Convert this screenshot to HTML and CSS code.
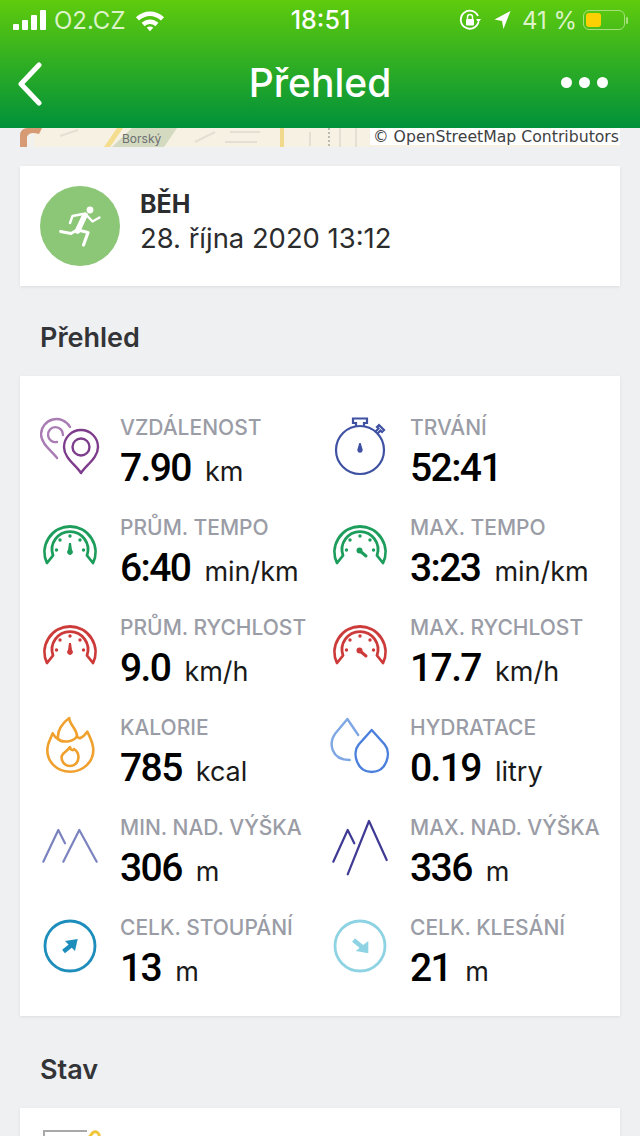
FILE: index.html
```html
<!DOCTYPE html>
<html lang="cs">
<head>
  <meta charset="utf-8" />
  <title>Přehled</title>
  <link rel="stylesheet" href="styles.css">
</head>

<body>
  <svg class="defs" width="0" height="0">
    <symbol id="gauge-shell" viewBox="0 0 60 70">
      <path d="M7 47A25.5 25.5 0 1 1 53 47L47 39.5A18 18 0 1 0 13 39.5Z" fill="none" stroke="currentColor" stroke-width="2.8" stroke-linejoin="round"/>
      <g fill="currentColor">
        <circle cx="16.5" cy="34" r="1.7"/>
        <circle cx="20" cy="24" r="1.7"/>
        <circle cx="30" cy="20" r="1.7"/>
        <circle cx="40" cy="24" r="1.7"/>
        <circle cx="43.5" cy="34" r="1.7"/>
      </g>
    </symbol>
    <symbol id="gauge-avg" viewBox="0 0 60 70">
      <use href="#gauge-shell"/>
      <path d="M29 27h2l1 7a2.8 2.8 0 1 1-4 0Z" fill="currentColor"/>
    </symbol>
    <symbol id="gauge-max" viewBox="0 0 60 70">
      <use href="#gauge-shell"/>
      <circle cx="29.5" cy="34.5" r="3" fill="currentColor"/>
      <path d="M30 35l6 5" stroke="currentColor" stroke-width="3" stroke-linecap="round"/>
    </symbol>
  </svg>

  <header class="top-bar">
    <div class="status-bar">
      <div class="status-side">
        <div class="signal"><i></i><i></i><i></i><i></i></div>
        <span class="carrier">O2.CZ</span>
        <svg class="wifi" width="30" height="23" viewBox="0 0 32 24">
          <path d="M1 8.5C9.500 .5 22.500 .5 31 8.500L27.700 12C20.500 5.500 11.500 5.500 4.300 12Z" fill="#fff"/>
          <path d="M7 14.500C12.500 9.700 19.500 9.700 25 14.500L21.700 18C18 15 14 15 10.300 18Z" fill="#fff"/>
          <path d="M12.500 19.500C14.700 18 17.300 18 19.500 19.500L16 23.500Z" fill="#fff"/>
        </svg>
      </div>
      <span class="clock">18:51</span>
      <div class="status-side status-right">
        <svg width="22" height="22" viewBox="0 0 22 22">
          <path d="M19.500 13A9 9 0 1 1 19 7" fill="none" stroke="#fff" stroke-width="1.800"/>
          <path d="M17 10h5l-2.500 3.500Z" fill="#fff"/>
          <rect x="7" y="10" width="8" height="6.500" rx="1" fill="#fff"/>
          <path d="M8.500 10V8a2.500 2.500 0 0 1 5 0v2" fill="none" stroke="#fff" stroke-width="1.400"/>
        </svg>
        <svg class="locate" width="17" height="20" viewBox="0 0 18 20">
          <path d="M17.500 .5L10 19.500 8.500 11 .5 9.500Z" fill="#fff"/>
        </svg>
        <span class="battery-text">41 %</span>
        <div class="battery"><div class="battery-level"></div></div>
        <div class="battery-cap"></div>
      </div>
    </div>
    <nav class="nav-bar">
      <svg class="back" width="26" height="44" viewBox="0 0 26 44">
        <path d="M22 3L4 22l18 19" fill="none" stroke="#fff" stroke-width="5" stroke-linecap="round" stroke-linejoin="round"/>
      </svg>
      <h1>Přehled</h1>
      <div class="more"><i></i><i></i><i></i></div>
    </nav>
  </header>

  <div class="map-strip">
    <svg width="600" height="20" viewBox="0 0 600 20">
      <rect width="600" height="19" fill="#f6f1e3"/>
      <path d="M0 0h14v19H0Z" fill="#f2f1ee"/>
      <path d="M0 19V8Q0 0 8 0h14l-3 6Q9 3 7 9V19Z" fill="#d69a74"/>
      <path d="M92 19L112 0h45l-13 19Z" fill="#d3dabf"/>
      <path d="M84 19L97 0h6L90 19Z" fill="#f4dd8c"/>
      <path d="M260 0h4v19h-4Z" fill="#f0d98a"/>
      <path d="M40 8l18-6M175 14l20-10M210 4h30M205 14h32M290 4v14M320 0v19M336 0v19" stroke="#e3dfd3" stroke-width="2"/>
      <path d="M309 0v19" stroke="#bdbab0" stroke-width="2" stroke-dasharray="2 2"/>
    </svg>
    <span class="map-label">Borský</span>
    <span class="map-credit">© OpenStreetMap Contributors</span>
  </div>

  <section class="card activity">
    <div class="activity-badge">
      <svg width="80" height="80" viewBox="0 0 80 80">
        <circle cx="50" cy="24" r="3.400" fill="#fff"/>
        <g fill="none" stroke="#fff" stroke-linecap="round" stroke-linejoin="round">
          <path d="M45 29L37.500 45" stroke-width="5.500"/>
          <path d="M46.500 29l6 6.500 7-4" stroke-width="2.400"/>
          <path d="M43 28l-10.500 2-2.500 7" stroke-width="2.400"/>
          <path d="M37 44l-6 3.500-10.500-2" stroke-width="2.800"/>
          <path d="M38 44l10 2.500-4.500 12.500" stroke-width="3.200"/>
        </g>
      </svg>
    </div>
    <div class="activity-text">
      <div class="activity-name">BĚH</div>
      <div class="activity-date">28. října 2020 13:12</div>
    </div>
  </section>

  <h2 class="section-title">Přehled</h2>

  <section class="card stats">
    <div class="stat">
      <svg class="stat-icon" viewBox="0 0 60 70">
        <path d="M17 42C12 35 1 28 1 18A15.500 15.500 0 0 1 30 11" fill="none" stroke="#a97cb4" stroke-width="2.400" stroke-linecap="round"/>
        <path d="M23 19a7.500 7.500 0 1 0-6 7" fill="none" stroke="#a97cb4" stroke-width="2.400" stroke-linecap="round"/>
        <path d="M41 57C36 49 24 42 24 31a17 17 0 0 1 34 0C58 42 46 49 41 57Z" fill="#fff" stroke="#7d3c8c" stroke-width="2.400" stroke-linejoin="round"/>
        <circle cx="41" cy="31" r="8.500" fill="none" stroke="#7d3c8c" stroke-width="2.400"/>
      </svg>
      <div>
        <div class="stat-label">VZDÁLENOST</div>
        <div class="stat-value"><b>7.90</b><span>km</span></div>
      </div>
    </div>
    <div class="stat">
      <svg class="stat-icon" viewBox="0 0 60 70">
        <g fill="none" stroke="#3f51a3" stroke-width="2.200">
          <circle cx="30" cy="34" r="24"/>
          <path d="M26 10V7h-3V2.500h14V7h-3v3"/>
          <path d="M45 16l3.500-3.500-1.500-1.500 2-2 5 5-2 2-1.500-1.500-3 3"/>
        </g>
        <path d="M29.300 27h1.400l1.800 6a2.700 2.700 0 1 1-5 0Z" fill="#3f51a3"/>
      </svg>
      <div>
        <div class="stat-label">TRVÁNÍ</div>
        <div class="stat-value"><b>52:41</b></div>
      </div>
    </div>
    <div class="stat">
      <svg class="stat-icon tint-green"><use href="#gauge-avg"/></svg>
      <div>
        <div class="stat-label">PRŮM. TEMPO</div>
        <div class="stat-value"><b>6:40</b><span>min/km</span></div>
      </div>
    </div>
    <div class="stat">
      <svg class="stat-icon tint-green"><use href="#gauge-max"/></svg>
      <div>
        <div class="stat-label">MAX. TEMPO</div>
        <div class="stat-value"><b>3:23</b><span>min/km</span></div>
      </div>
    </div>
    <div class="stat">
      <svg class="stat-icon tint-red"><use href="#gauge-avg"/></svg>
      <div>
        <div class="stat-label">PRŮM. RYCHLOST</div>
        <div class="stat-value"><b>9.0</b><span>km/h</span></div>
      </div>
    </div>
    <div class="stat">
      <svg class="stat-icon tint-red"><use href="#gauge-max"/></svg>
      <div>
        <div class="stat-label">MAX. RYCHLOST</div>
        <div class="stat-value"><b>17.7</b><span>km/h</span></div>
      </div>
    </div>
    <div class="stat">
      <svg class="stat-icon" viewBox="0 0 60 70">
        <g fill="none" stroke="#f0a02c" stroke-width="2.600" stroke-linejoin="round" stroke-linecap="round">
          <path d="M30 55.700C17 55.700 7.300 46 7.300 34C7.300 27 11 22 12.700 17.300C14 20 16 22 18 23C17 15 22 7 29.300 2C29 8 37 13 37 20C37 21 39 22 40 22.300C43 21 45 19 47.300 15.700C50 21 53.300 27 53.300 34C53.300 46 43 55.700 30 55.700Z"/>
          <path d="M18 23C20 25 25 26 30 25C34 24 36 22 37 20"/>
          <path d="M30 31C30.500 34 33 35 34 33C37 35 38.500 38 38.500 41C38.500 46 35 50 30 50C25 50 21.500 46 21.500 41C21.500 37 27 36 30 31Z"/>
        </g>
      </svg>
      <div>
        <div class="stat-label">KALORIE</div>
        <div class="stat-value"><b>785</b><span>kcal</span></div>
      </div>
    </div>
    <div class="stat">
      <svg class="stat-icon" viewBox="0 0 60 70">
        <path d="M28.200 19L17.400 3 5.700 17C-2 27 1 44 19.700 44" fill="none" stroke="#7fa7e4" stroke-width="2.400" stroke-linecap="round" stroke-linejoin="round"/>
        <path d="M41.700 14L28.700 28.500C21.700 37 26.700 56 41.700 56C56.700 56 61.700 37 54.700 28.500Z" fill="#fff" stroke="#4a7fdc" stroke-width="2.400" stroke-linejoin="round"/>
      </svg>
      <div>
        <div class="stat-label">HYDRATACE</div>
        <div class="stat-value"><b>0.19</b><span>litry</span></div>
      </div>
    </div>
    <div class="stat">
      <svg class="stat-icon" viewBox="0 0 60 70">
        <path d="M3.300 45.700L18.300 14 25 27.300M23.300 45.700L39.300 14 56.700 45.700" fill="none" stroke="#7b83bf" stroke-width="2.200" stroke-linecap="round" stroke-linejoin="round"/>
      </svg>
      <div>
        <div class="stat-label">MIN. NAD. VÝŠKA</div>
        <div class="stat-value"><b>306</b><span>m</span></div>
      </div>
    </div>
    <div class="stat">
      <svg class="stat-icon" viewBox="0 0 60 70">
        <path d="M3.300 45.700L17.700 14 24.300 27.300M17.700 58.300L39 5 56.700 44" fill="none" stroke="#3f3a94" stroke-width="2.200" stroke-linecap="round" stroke-linejoin="round"/>
      </svg>
      <div>
        <div class="stat-label">MAX. NAD. VÝŠKA</div>
        <div class="stat-value"><b>336</b><span>m</span></div>
      </div>
    </div>
    <div class="stat">
      <svg class="stat-icon" viewBox="0 0 60 70">
        <circle cx="30" cy="30" r="25" fill="none" stroke="#1d8dbb" stroke-width="2.800"/>
        <path d="M25 25L37.700 23 35 35Z" fill="#1d8dbb"/>
        <path d="M31 29.500L23.500 35.500" stroke="#1d8dbb" stroke-width="4.500"/>
      </svg>
      <div>
        <div class="stat-label">CELK. STOUPÁNÍ</div>
        <div class="stat-value"><b>13</b><span>m</span></div>
      </div>
    </div>
    <div class="stat">
      <svg class="stat-icon" viewBox="0 0 60 70">
        <circle cx="30" cy="30" r="25" fill="none" stroke="#8ed3e3" stroke-width="2.800"/>
        <path d="M38.300 37.300L25.700 35 38.300 25Z" fill="#8ed3e3"/>
        <path d="M23.500 24L32 31" stroke="#8ed3e3" stroke-width="4.500"/>
      </svg>
      <div>
        <div class="stat-label">CELK. KLESÁNÍ</div>
        <div class="stat-value"><b>21</b><span>m</span></div>
      </div>
    </div>
  </section>

  <h2 class="section-title">Stav</h2>

  <section class="card status-card">
    <svg width="60" height="28" viewBox="0 0 60 28">
      <path d="M1 28V1H44" fill="none" stroke="#a9a9a9" stroke-width="2"/>
      <path d="M44 10L50 2.500a4 4 0 0 1 6 4.500" fill="none" stroke="#f0c63a" stroke-width="3"/>
    </svg>
  </section>
</body>
</html>
```

FILE: styles.css
```css
html, body {
  margin: 0;
  padding: 0;
  height: 100%;
  overflow: hidden;
  background: #eff0f2;
  font-family: Inter, "Noto Sans", sans-serif;
  color: #2b2c2e;
}

.defs {
  display: block;
}

.top-bar {
  height: 128px;
  color: #fff;
  background: linear-gradient(#5fcb0d, #00913a);
}

.status-bar {
  height: 40px;
  padding: 0 12px 0 13px;
  display: grid;
  grid-template-columns: 1fr auto 1fr;
  align-items: center;
  font-size: 25px;
}

.status-side {
  display: flex;
  align-items: center;
}

.status-right {
  justify-content: flex-end;
  color: #dcf3c8;
}

.signal {
  display: flex;
  align-items: flex-end;
  gap: 3px;
  height: 20px;
  margin-right: 8px;
}

.signal i {
  width: 6px;
  background: #fff;
  border-radius: 1px;
}

.signal i:nth-child(1) { height: 6px; }
.signal i:nth-child(2) { height: 10px; }
.signal i:nth-child(3) { height: 15px; }
.signal i:nth-child(4) { height: 20px; }

.carrier {
  color: #dcf3c8;
  font-size: 24px;
  font-weight: 400;
  margin-right: 10px;
}

.clock {
  font-weight: 500;
}

.locate {
  margin: 0 11px 0 13px;
}

.battery-text {
  font-size: 24px;
  margin-right: 6px;
}

.battery {
  width: 42px;
  height: 20px;
  padding: 2px;
  box-sizing: border-box;
  border: 1.5px solid #a6e07c;
  border-radius: 6px;
}

.battery-level {
  width: 15px;
  height: 100%;
  background: #fdd004;
  border-radius: 3px;
}

.battery-cap {
  width: 2px;
  height: 7px;
  margin-left: 1px;
  background: #a6e07c;
  border-radius: 1px;
}

.nav-bar {
  height: 88px;
  padding: 0 32px 4px;
  box-sizing: border-box;
  display: grid;
  grid-template-columns: 1fr auto 1fr;
  align-items: center;
}

.back {
  margin: 4px 0 0 -15px;
}

.nav-bar h1 {
  margin: 0;
  font-size: 39px;
  font-weight: 500;
}

.more {
  display: flex;
  justify-content: flex-end;
  gap: 7px;
}

.more i {
  width: 11px;
  height: 11px;
  background: #fff;
  border-radius: 50%;
}

.map-strip {
  position: relative;
  height: 20px;
  margin: 0 20px 18px;
  overflow: hidden;
}

.map-strip svg {
  display: block;
}

.map-label {
  position: absolute;
  left: 102px;
  top: 3px;
  font-size: 12px;
  line-height: 16px;
  color: #6d6f72;
}

.map-credit {
  position: absolute;
  right: 0;
  top: 0;
  padding: 0 1px 0 3px;
  height: 17px;
  background: #fff;
  font-family: "DejaVu Sans", sans-serif;
  font-size: 15.7px;
  line-height: 17px;
  color: #404244;
}

.card {
  margin: 0 20px;
  background: #fff;
  box-shadow: 0 1px 3px rgba(0, 0, 0, 0.08);
}

.activity {
  height: 120px;
  padding: 0 20px;
  box-sizing: border-box;
  display: flex;
  align-items: center;
  gap: 21px;
}

.activity-badge {
  width: 80px;
  height: 80px;
  border-radius: 50%;
  background: #8cc677;
}

.activity-text {
  margin-left: -1px;
  padding-bottom: 10px;
}

.activity-name {
  font-size: 25px;
  font-weight: 700;
  line-height: 34px;
}

.activity-date {
  font-size: 27.4px;
  line-height: 34px;
}

.section-title {
  margin: 0;
  height: 90px;
  padding: 37px 0 0 40px;
  box-sizing: border-box;
  font-size: 27px;
  font-weight: 600;
  line-height: 30px;
  color: #333437;
}

.section-title:nth-of-type(2) {
  height: 92px;
  padding-top: 39px;
}

.stats {
  padding: 40px 0 0 20px;
  height: 640px;
  box-sizing: border-box;
  display: grid;
  grid-template-columns: 290px 1fr;
  grid-auto-rows: 100px;
}

.stat {
  display: grid;
  grid-template-columns: 60px 1fr;
  gap: 20px;
}

.stat-icon {
  width: 60px;
  height: 70px;
}

.tint-green { color: #1d9d5b; }
.tint-red { color: #cc3a3a; }

.stat-label {
  margin-top: 1px;
  font-size: 21px;
  font-weight: 500;
  line-height: 22px;
  color: #9a9ca6;
  white-space: nowrap;
}

.stat-value {
  margin-top: 7px;
  display: flex;
  align-items: baseline;
  gap: 14px;
  line-height: 44px;
  color: #000;
}

.stat-value b {
  font-family: Roboto, sans-serif;
  font-size: 39px;
  font-weight: 500;
  letter-spacing: -1.6px;
}

.stat-value span {
  font-size: 27px;
  color: #1a1a1a;
}

.status-card {
  height: 40px;
  padding: 22px 0 0 23px;
  box-sizing: border-box;
}

.status-card svg {
  display: block;
}
```
